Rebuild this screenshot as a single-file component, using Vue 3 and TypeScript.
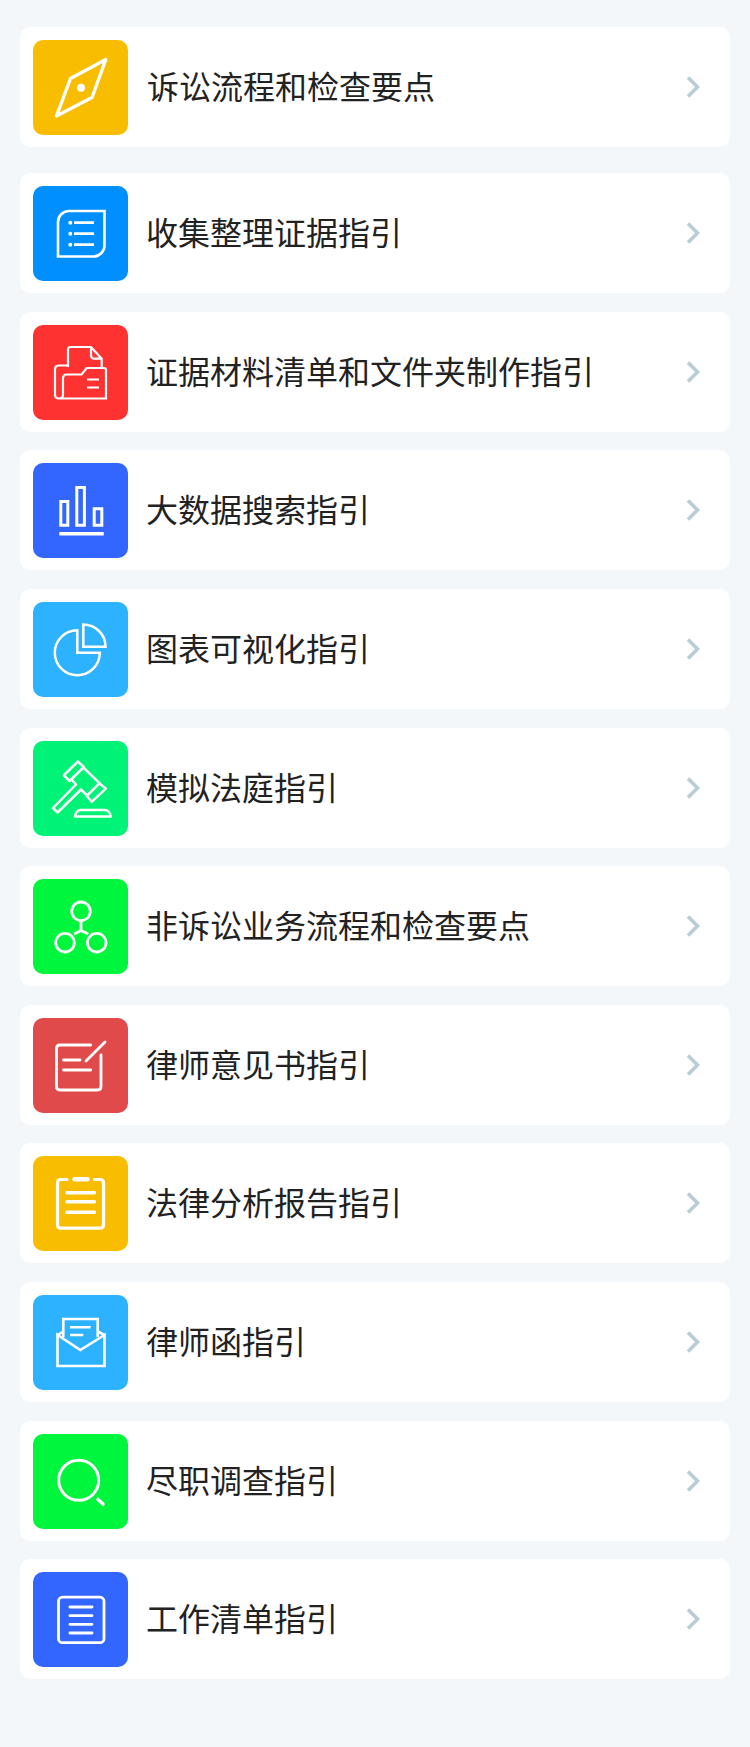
<script setup lang="ts">
interface GuideItem {
  title: string
  color: string
  icon: string
}

const items: GuideItem[] = [
  {
    title: '诉讼流程和检查要点',
    color: '#f9bd00',
    icon: '<path stroke-width="3.4" stroke-linejoin="round" d="M72.800 19.500 37.500 38.500 23.500 76 59 57.500Z"/><circle cx="48" cy="47.700" r="4" fill="#fff" stroke="none"/>',
  },
  {
    title: '收集整理证据指引',
    color: '#008ffe',
    icon: '<path stroke-width="2.600" d="M71.500 25H36a11 11 0 0 0-11 11v34.500H60.500a11 11 0 0 0 11-11Z"/><path stroke-width="2.800" d="M41 36.700H61M41 47.700H61M41 58.700H61"/><g fill="#fff" stroke="none"><circle cx="37.300" cy="36.700" r="2"/><circle cx="37.300" cy="47.700" r="2"/><circle cx="37.300" cy="58.700" r="2"/></g>',
  },
  {
    title: '证据材料清单和文件夹制作指引',
    color: '#ff3232',
    icon: '<path stroke-width="2.200" d="M35 42V24.500Q35 22 37.500 22H58L68.700 33.700V43M58 22V30Q58 33.700 61.500 33.700H68.700M34 40.500H26Q22 40.500 22 44.500V69.500Q22 73.500 26 73.500H73V45Q73 43 71 43H53.700L48.500 49.500H34Q30 49.500 30 53.500V69.500Q30 73.500 26 73.500M54 54.500H66M54 62.500H66"/>',
  },
  {
    title: '大数据搜索指引',
    color: '#3366ff',
    icon: '<path stroke-width="3" d="M27.800 38.500H34.800V62.200H27.800ZM43.800 24.500H51.400V62.200H43.800ZM61.200 45.800H68.800V62.200H61.200Z"/><path stroke-width="3.600" d="M26.300 70.800H70.700"/>',
  },
  {
    title: '图表可视化指引',
    color: '#2db2ff',
    icon: '<path stroke-width="2.500" d="M44.300 28.200A22.500 22.500 0 1 0 66.800 50.700H44.300ZM50.300 22.500V44.700H72.500A22.200 22.200 0 0 0 50.300 22.500Z"/>',
  },
  {
    title: '模拟法庭指引',
    color: '#00f376',
    icon: '<g stroke-width="2.500" stroke-linejoin="round"><path d="M44.800 20.500 30.800 34.300 36.500 40 50.800 26Z"/><path d="M50.300 26.500 67 42.700M38.500 38.500 43 43.500 20 67 24.500 71.500 48 48.500 54 54.500"/><path d="M66.300 42.300 72.800 47.700 58.700 60.800 53.700 55Z"/><path d="M42 75.500Q43 69 48 69H71.500Q76.500 69 77.700 75.500Z"/></g>',
  },
  {
    title: '非诉讼业务流程和检查要点',
    color: '#00f63c',
    icon: '<g stroke-width="2.800"><circle cx="48" cy="32.300" r="9.300"/><circle cx="32" cy="63.700" r="9.300"/><circle cx="63.700" cy="63.700" r="9.300"/><path d="M48 42V51.500M41 55 48 51.500 55.300 55"/></g>',
  },
  {
    title: '律师意见书指引',
    color: '#e04a4a',
    icon: '<g stroke-width="2.800" stroke-linecap="round"><path d="M57.700 27H27Q23.500 27 23.500 30.500V68.500Q23.500 72 27 72H64.500Q68 72 68 68.500V37"/><path d="M53 43 72 24M30.500 42H47M30.500 52H57.700"/></g>',
  },
  {
    title: '法律分析报告指引',
    color: '#f9bd00',
    icon: '<g stroke-width="3.200" stroke-linecap="round"><path d="M34 23.500H28Q24.500 23.500 24.500 27V68.700Q24.500 72.200 28 72.200H67Q70.500 72.200 70.500 68.700V27Q70.500 23.500 67 23.500H61.500"/><path stroke-width="4.400" d="M41.500 23.300H54.500"/><path stroke-width="3.400" d="M34 36.700H61.500M34 45.700H61.500M34 56.300H61.500"/></g>',
  },
  {
    title: '律师函指引',
    color: '#2db2ff',
    icon: '<g stroke-width="2.600"><path d="M24.500 40V71H71.500V40L47.300 55Z"/><path d="M30.300 42V24H64.700V42M24.500 40 30.300 36.500M71.500 40 64.700 36.500"/><path d="M37 32.300H57.700M37 40H50.300"/></g>',
  },
  {
    title: '尽职调查指引',
    color: '#00f63c',
    icon: '<circle cx="45.700" cy="46.300" r="20" stroke-width="3"/><path stroke-width="3.600" stroke-linecap="round" d="M65 65.500 70 70"/>',
  },
  {
    title: '工作清单指引',
    color: '#3366ff',
    icon: '<rect x="25.500" y="25.200" width="45.500" height="45.500" rx="4" stroke-width="2.800"/><path stroke-width="2.800" stroke-linecap="round" d="M37 35H59M37 43.700H59M37 52.300H59M37 61H59"/>',
  },
]
</script>

<template>
  <div class="page">
    <div v-for="item in items" :key="item.title" class="row">
      <div class="tile" :style="{ backgroundColor: item.color }">
        <svg class="tile-icon" viewBox="0 0 95 95" v-html="item.icon"></svg>
      </div>
      <span class="title">{{ item.title }}</span>
      <svg class="arrow" width="20" height="28" viewBox="0 0 20 28">
        <path d="M4 4.500 13.500 14 4 23.500" />
      </svg>
    </div>
  </div>
</template>

<style>
html,
body {
  background: #f4f7fa;
}
</style>

<style scoped>
.page {
  box-sizing: border-box;
  min-height: 1747px;
  padding: 27px 20px 0;
  background: #f4f7fa;
  display: flex;
  flex-direction: column;
  gap: 18.65px;
  font-family: "Noto Sans CJK SC", "Liberation Sans", sans-serif;
}

.row {
  display: flex;
  align-items: center;
  flex: none;
  height: 120px;
  padding: 0 26px 0 13px;
  background: #fff;
  border-radius: 10px;
}

/* 第一行和第二行之间间距更大 */
.row:first-child {
  margin-bottom: 7.3px;
}

.tile {
  flex: none;
  width: 95px;
  height: 95px;
  margin-top: 1px;
  border-radius: 10px;
}

.tile-icon {
  display: block;
  width: 95px;
  height: 95px;
  fill: none;
  stroke: #fff;
}

.title {
  flex: 1;
  margin: -4px 0 0 18px;
  font-size: 32px;
  line-height: 44px;
  color: #222;
}

.row:first-child .title {
  margin-left: 19px;
}

.arrow {
  flex: none;
  fill: none;
  stroke: #b9cdd6;
  stroke-width: 3.6;
}
</style>
